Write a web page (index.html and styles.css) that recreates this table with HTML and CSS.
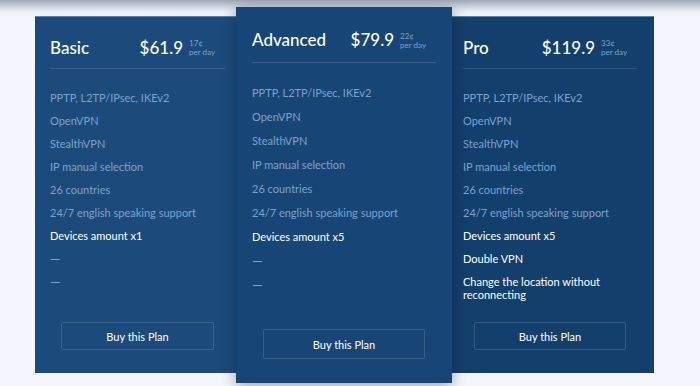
FILE: index.html
```html
<!DOCTYPE html>
<html lang="en">
<head>
  <meta charset="UTF-8" />
  <meta name="viewport" content="width=device-width, initial-scale=1.0"/>
  <title>Plans</title>
  <link rel="stylesheet" href="styles.css">
</head>
<body>

  <div class="plans">

    <div class="plan plan-basic">
      <div class="plan-head">
        <h2>Basic</h2>
        <div class="price">
          <span class="amount">$61.9</span>
          <span class="per-day">17¢<br>per day</span>
        </div>
      </div>
      <ul class="features">
        <li>PPTP, L2TP/IPsec, IKEv2</li>
        <li>OpenVPN</li>
        <li>StealthVPN</li>
        <li>IP manual selection</li>
        <li>26 countries</li>
        <li>24/7 english speaking support</li>
        <li class="on">Devices amount x1</li>
        <li class="dash">—</li>
        <li class="dash">—</li>
      </ul>
      <button class="buy-btn">Buy this Plan</button>
    </div>

    <div class="plan plan-advanced">
      <div class="plan-head">
        <h2>Advanced</h2>
        <div class="price">
          <span class="amount">$79.9</span>
          <span class="per-day">22¢<br>per day</span>
        </div>
      </div>
      <ul class="features">
        <li>PPTP, L2TP/IPsec, IKEv2</li>
        <li>OpenVPN</li>
        <li>StealthVPN</li>
        <li>IP manual selection</li>
        <li>26 countries</li>
        <li>24/7 english speaking support</li>
        <li class="on">Devices amount x5</li>
        <li class="dash">—</li>
        <li class="dash">—</li>
      </ul>
      <button class="buy-btn">Buy this Plan</button>
    </div>

    <div class="plan plan-pro">
      <div class="plan-head">
        <h2>Pro</h2>
        <div class="price">
          <span class="amount">$119.9</span>
          <span class="per-day">33¢<br>per day</span>
        </div>
      </div>
      <ul class="features">
        <li>PPTP, L2TP/IPsec, IKEv2</li>
        <li>OpenVPN</li>
        <li>StealthVPN</li>
        <li>IP manual selection</li>
        <li>26 countries</li>
        <li>24/7 english speaking support</li>
        <li class="on">Devices amount x5</li>
        <li class="on">Double VPN</li>
        <li class="on">Change the location without reconnecting</li>
      </ul>
      <button class="buy-btn">Buy this Plan</button>
    </div>

  </div>

</body>
</html>
```

FILE: styles.css
```css
body {
  margin: 0;
  font-family: 'Lato', 'Open Sans', sans-serif;
  background: linear-gradient(to bottom, #a0a8b7 0, #c9cfda 6px, #e8ecf4 11px, #f4f7fd 17px) no-repeat, #f4f7fd;
  height: 386px;
  overflow: hidden;
}

.plans {
  display: flex;
  align-items: flex-start;
  padding: 16px 0 0 35px;
}

.plan {
  box-sizing: border-box;
  width: 205px;
  height: 357px;
  padding: 0 15px 23px;
  display: flex;
  flex-direction: column;
  color: #fff;
  border-top: 1px solid #5b81aa;
}

.plan-basic {
  background-color: #1c4b7b;
}

.plan-pro {
  background-color: #133f6c;
  padding-left: 14px;
  padding-right: 17px;
}

.plan-advanced {
  position: relative;
  z-index: 2;
  width: 216px;
  height: 376px;
  margin: -9px -3px 0 -4px;
  padding: 0 16px 24px;
  background-color: #174676;
  border-top: none;
  box-shadow: 0 3px 14px rgba(10, 25, 50, 0.4);
}

.plan-head {
  display: flex;
  justify-content: space-between;
  align-items: center;
  height: 42px;
  padding-top: 9px;
  border-bottom: 1px solid rgba(255, 255, 255, 0.13);
}

.plan-advanced .plan-head {
  height: 45px;
  padding-top: 10px;
}

.plan-head h2 {
  margin: 0;
  font-size: 17px;
  font-weight: 500;
}

.price {
  display: flex;
  align-items: center;
  margin-right: 10px;
}

.amount {
  font-size: 17px;
  font-weight: 500;
}

.per-day {
  margin-left: 6px;
  padding-top: 2px;
  font-size: 8px;
  line-height: 9px;
  color: #7da2cc;
}

.features {
  list-style: none;
  margin: 0;
  padding: 22px 0 0;
  font-size: 11px;
  line-height: 13px;
  color: #7da2cc;
}

.features li {
  margin-bottom: 10px;
}

.features li.dash {
  transform: scaleX(1.2);
  transform-origin: left;
  width: max-content;
}

.plan-advanced .features {
  padding-top: 23px;
}

.plan-advanced .features li {
  margin-bottom: 11px;
}

.features li.on {
  color: #fff;
}

.buy-btn {
  margin: auto 11px 0;
  height: 28px;
  background: transparent;
  border: 1px solid rgba(255, 255, 255, 0.14);
  border-radius: 2px;
  color: #fff;
  font-family: inherit;
  font-size: 11px;
  cursor: pointer;
}

.plan-advanced .buy-btn {
  height: 30px;
}
```
